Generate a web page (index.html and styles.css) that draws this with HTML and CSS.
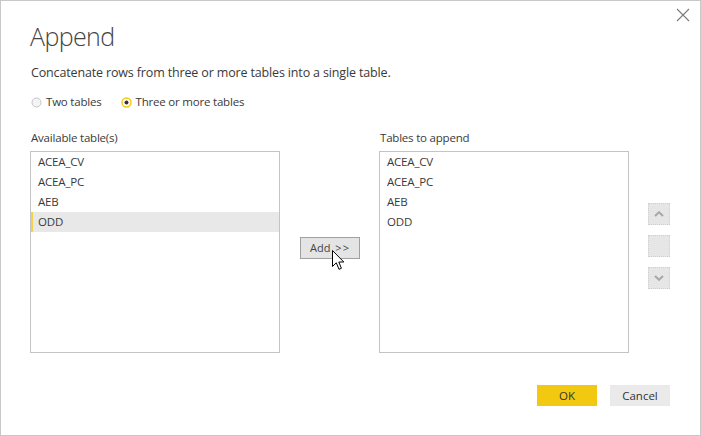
FILE: index.html
```html
<!DOCTYPE html>
<html>
<head>
<meta charset="utf-8">
<link rel="stylesheet" href="styles.css">
</head>
<body>
<div class="dialog">
  <div class="header">
    <h1 class="title">Append</h1>
    <button class="close" aria-label="Close">
      <svg width="14" height="14" viewBox="0 0 14 14"><path d="M1 1 L13 13 M13 1 L1 13" stroke="#7a7a7a" stroke-width="1.1" fill="none"/></svg>
    </button>
  </div>
  <p class="subtitle">Concatenate rows from three or more tables into a single table.</p>
  <div class="radios">
    <label class="radio">
      <svg width="11" height="11" viewBox="0 0 11 11"><circle cx="5.5" cy="5.5" r="4.5" fill="#f4f4f4" stroke="#c4c4c4" stroke-width="1"/></svg>
      <span>Two tables</span>
    </label>
    <label class="radio">
      <svg width="11" height="11" viewBox="0 0 11 11"><circle cx="5.5" cy="5.5" r="4.5" fill="#fff" stroke="#f2c811" stroke-width="1.4"/><circle cx="5.5" cy="5.5" r="2" fill="#333"/></svg>
      <span>Three or more tables</span>
    </label>
  </div>
  <div class="columns">
    <div class="col">
      <div class="label">Available table(s)</div>
      <ul class="list">
        <li>ACEA_CV</li>
        <li>ACEA_PC</li>
        <li>AEB</li>
        <li class="selected">ODD</li>
      </ul>
    </div>
    <div class="middle">
      <button class="add">Add <span class="chev">&gt;&gt;</span></button>
      <svg class="cursor" width="13" height="21" viewBox="0 0 13 21"><path d="M0.5 0.5 L0.5 16.5 L4.3 12.8 L7 19.3 L9.4 18.3 L6.8 12 L11.8 12 Z" fill="#fff" stroke="#000" stroke-width="1" stroke-linejoin="miter"/></svg>
    </div>
    <div class="col">
      <div class="label">Tables to append</div>
      <ul class="list">
        <li>ACEA_CV</li>
        <li>ACEA_PC</li>
        <li>AEB</li>
        <li>ODD</li>
      </ul>
    </div>
    <div class="order">
      <button class="sq"><svg width="10" height="6" viewBox="0 0 10 6"><path d="M1 5 L5 1.2 L9 5" stroke="#a8a8a8" stroke-width="2" fill="none"/></svg></button>
      <button class="sq"></button>
      <button class="sq"><svg width="10" height="6" viewBox="0 0 10 6"><path d="M1 1 L5 4.8 L9 1" stroke="#a8a8a8" stroke-width="2" fill="none"/></svg></button>
    </div>
  </div>
  <div class="footer">
    <button class="btn ok">OK</button>
    <button class="btn cancel">Cancel</button>
  </div>
</div>
</body>
</html>
```

FILE: styles.css
```css
html, body {
  margin: 0;
  padding: 0;
  background: #fff;
}
body {
  font-family: "Open Sans", "Liberation Sans", sans-serif;
  color: #3a3a3a;
}
.dialog {
  position: relative;
  width: 701px;
  height: 436px;
  box-sizing: border-box;
  border: 1px solid #c8c8c8;
  padding: 0 30px 0 29px;
  display: flex;
  flex-direction: column;
  background: #fff;
}
.header {
  display: flex;
  justify-content: space-between;
  align-items: flex-start;
  margin-right: -20px;
}
.title {
  margin: 20px 0 0 0;
  font-size: 25px;
  line-height: 30px;
  font-weight: 300;
  letter-spacing: -0.6px;
  color: #444;
}
.close {
  margin-top: 7px;
  padding: 0;
  border: 0;
  background: transparent;
  width: 14px;
  height: 14px;
  display: flex;
}
.subtitle {
  margin: 13px 0 0 1px;
  font-size: 12.5px;
  line-height: 18px;
  letter-spacing: -0.15px;
}
.radios {
  margin-top: 11px;
  display: flex;
  gap: 18px;
  font-size: 11.5px;
  line-height: 18px;
  letter-spacing: -0.2px;
}
.radio {
  display: flex;
  align-items: center;
  gap: 4px;
  padding-left: 1px;
}
.columns {
  margin-top: 18px;
  display: flex;
  align-items: flex-start;
}
.col {
  display: flex;
  flex-direction: column;
}
.label {
  font-size: 11.5px;
  line-height: 18px;
  letter-spacing: -0.2px;
  padding-left: 1px;
  margin-bottom: 4px;
}
.list {
  list-style: none;
  margin: 0;
  padding: 0;
  width: 250px;
  height: 202px;
  box-sizing: border-box;
  border: 1px solid #c4c4c4;
}
.list li {
  height: 20px;
  line-height: 20px;
  padding-left: 7px;
  font-size: 11.5px;
  letter-spacing: -0.2px;
}
.list li.selected {
  background: #e8e8e8;
  box-shadow: inset 2px 0 0 #f2d34a;
}
.middle {
  position: relative;
  margin: 106px 19px 0 20px;
  width: 60px;
}
.add {
  width: 60px;
  height: 22px;
  box-sizing: border-box;
  border: 1px solid #a0a0a0;
  background: #e4e4e4;
  font-family: "Open Sans", "Liberation Sans", sans-serif;
  font-size: 11px;
  word-spacing: 2px;
  color: #444;
  padding: 0;
}
.chev {
  letter-spacing: 1px;
}
.cursor {
  position: absolute;
  left: 32px;
  top: 15px;
}
.order {
  margin: 74px 0 0 19px;
  display: flex;
  flex-direction: column;
  gap: 10px;
}
.sq {
  width: 22px;
  height: 22px;
  box-sizing: border-box;
  border: 1px dotted #cfcfcf;
  background: #e6e6e6;
  padding: 0;
  display: flex;
  align-items: center;
  justify-content: center;
}
.footer {
  margin-top: 32px;
  display: flex;
  justify-content: flex-end;
  gap: 13px;
}
.btn {
  width: 60px;
  height: 21px;
  border: 0;
  padding: 0;
  font-family: "Open Sans", "Liberation Sans", sans-serif;
  font-size: 11.5px;
  color: #333;
}
.ok {
  background: #f2c811;
}
.cancel {
  background: #eaeaea;
}
```
